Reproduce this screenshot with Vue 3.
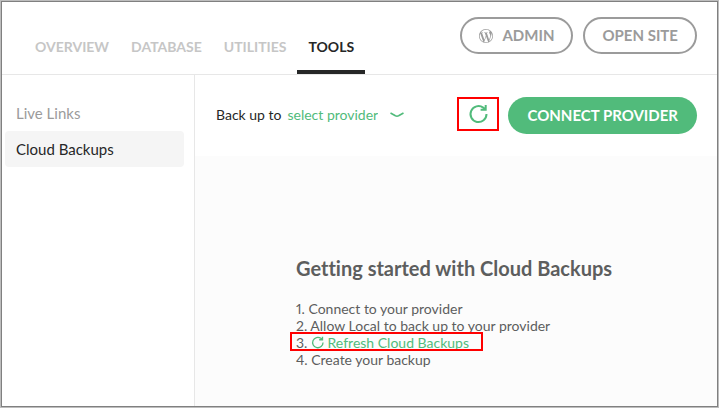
<script setup>
import { ref } from 'vue'

const tabs = ['OVERVIEW', 'DATABASE', 'UTILITIES', 'TOOLS']
const activeTab = ref('TOOLS')
const sections = ['Live Links', 'Cloud Backups']
const activeSection = ref('Cloud Backups')
const provider = ref('')
</script>

<template>
  <div class="window">
    <header class="header">
      <nav class="tabs">
        <a
          v-for="tab in tabs"
          :key="tab"
          href="#"
          class="tab"
          :class="{ active: tab === activeTab }"
          @click.prevent="activeTab = tab"
        >{{ tab }}</a>
      </nav>
      <div class="site-actions">
        <button type="button" class="pill outline">
          <svg class="wp" viewBox="0 0 24 24" aria-hidden="true">
            <path d="M21.469 6.825c.84 1.537 1.318 3.3 1.318 5.175 0 3.979-2.156 7.456-5.363 9.325l3.295-9.527c.615-1.54.82-2.771.82-3.864 0-.405-.026-.78-.07-1.11m-7.981.105c.647-.03 1.232-.105 1.232-.105.582-.075.514-.93-.067-.899 0 0-1.755.135-2.88.135-1.064 0-2.85-.15-2.85-.15-.585-.03-.661.855-.075.885 0 0 .54.061 1.125.09l1.68 4.605-2.37 7.08L5.354 6.9c.649-.03 1.234-.1 1.234-.1.585-.075.516-.93-.065-.896 0 0-1.746.138-2.874.138-.2 0-.438-.008-.69-.015C4.911 3.15 8.235 1.215 12 1.215c2.809 0 5.365 1.072 7.286 2.833-.046-.003-.091-.009-.141-.009-1.06 0-1.812.923-1.812 1.914 0 .89.513 1.643 1.06 2.531.411.72.89 1.643.89 2.977 0 .915-.354 1.994-.821 3.479l-1.075 3.585-3.9-11.61.001.014zM12 22.784c-1.059 0-2.081-.153-3.048-.437l3.237-9.406 3.315 9.087c.024.053.05.101.078.149-1.12.393-2.325.609-3.582.609M1.211 12c0-1.564.336-3.05.935-4.39L7.29 21.709C3.694 19.96 1.212 16.271 1.211 12M12 0C5.385 0 0 5.385 0 12s5.385 12 12 12 12-5.385 12-12S18.615 0 12 0" />
          </svg>
          <span>ADMIN</span>
        </button>
        <button type="button" class="pill outline">OPEN SITE</button>
      </div>
    </header>

    <div class="body">
      <aside class="sidebar">
        <a
          v-for="section in sections"
          :key="section"
          href="#"
          class="section"
          :class="{ active: section === activeSection }"
          @click.prevent="activeSection = section"
        >{{ section }}</a>
      </aside>

      <main class="main">
        <div class="toolbar">
          <div class="picker">
            <label for="provider">Back up to</label>
            <select id="provider" v-model="provider">
              <option value="">select provider</option>
            </select>
            <svg class="chevron" viewBox="0 0 14 6" aria-hidden="true">
              <path d="M0.5 1 L5.4 3.8 Q7 4.6 8.6 3.8 L13.5 1" />
            </svg>
          </div>
          <button type="button" class="refresh" aria-label="Refresh">
            <svg viewBox="0 0 20 20" aria-hidden="true">
              <path class="stroke" d="M18.5 10 A8 8 0 1 1 15.2 3.6 L17.2 5" />
              <path class="stroke" d="M17.7 1 V5.8 H12.6" />
            </svg>
          </button>
          <button type="button" class="pill solid">CONNECT PROVIDER</button>
        </div>

        <section class="content">
          <div class="guide">
            <h1>Getting started with Cloud Backups</h1>
            <ol>
              <li>1. Connect to your provider</li>
              <li>2. Allow Local to back up to your provider</li>
              <li class="marked">3.
                <a href="#" @click.prevent>
                  <svg viewBox="0 0 20 20" aria-hidden="true">
                    <path class="stroke" d="M18.5 10 A8 8 0 1 1 15.2 3.6 L17.2 5" />
                    <path class="stroke" d="M17.7 1 V5.8 H12.6" />
                  </svg>
                  Refresh Cloud Backups</a>
              </li>
              <li>4. Create your backup</li>
            </ol>
          </div>
        </section>
      </main>
    </div>
  </div>
</template>

<style>
body {
  background: #fff;
}
</style>

<style scoped>
.window {
  box-sizing: border-box;
  min-height: 100vh;
  display: flex;
  flex-direction: column;
  border: 1px solid #bdbdbd;
  outline: 1px solid #808080;
  outline-offset: -2px;
  padding: 1px;
  background: #fff;
  color: #262727;
  font-family: Lato, "Open Sans", sans-serif;
  font-size: 14px;
  font-variant-ligatures: none;
  font-variant-numeric: proportional-nums;
}

a {
  text-decoration: none;
}

.header {
  display: flex;
  justify-content: space-between;
  height: 72px;
  padding: 0 20px 0 22px;
  border-bottom: 1px solid #e7e7e7;
}

.tabs {
  display: flex;
}

.tab {
  box-sizing: border-box;
  padding: 34px 11px 0;
  border-bottom: 4px solid transparent;
  color: #c6c6c6;
  font-size: 14px;
  font-weight: 700;
  line-height: 22px;
}

.tab.active {
  color: #262727;
  border-color: #262727;
}

.site-actions {
  display: flex;
  gap: 10px;
  padding-top: 15px;
}

.pill {
  box-sizing: border-box;
  height: 37px;
  display: flex;
  align-items: center;
  border-radius: 19px;
  font-family: inherit;
  font-size: 15px;
  font-weight: 700;
  line-height: 18px;
  white-space: nowrap;
}

.outline {
  gap: 9px;
  padding: 0 17px 2px;
  border: 2px solid #9b9b9b;
  background: #fff;
  color: #9b9b9b;
}

.solid {
  padding: 0 19px 2px;
  border: 0;
  background: #51bb7b;
  color: #fff;
}

.wp {
  width: 14px;
  height: 14px;
  margin-top: 2px;
  fill: #9b9b9b;
}

.body {
  flex: 1;
  display: flex;
}

.sidebar {
  box-sizing: border-box;
  width: 193px;
  flex: none;
  padding: 20px 10px 0 3px;
  border-right: 1px solid #e7e7e7;
}

.section {
  display: block;
  padding: 0 11px;
  border-radius: 4px;
  color: #9b9b9b;
  font-size: 15px;
  line-height: 36px;
}

.section.active {
  background: #f5f5f5;
  color: #262727;
}

.main {
  flex: 1;
  display: flex;
  flex-direction: column;
}

.toolbar {
  display: flex;
  align-items: flex-start;
  padding: 22px 20px;
}

.picker {
  flex: 1;
  display: flex;
  align-items: center;
  gap: 6px;
  height: 35px;
  padding-left: 1px;
}

.picker select {
  appearance: none;
  margin: 0;
  padding: 0;
  border: 0;
  background: transparent;
  color: #51bb7b;
  font: inherit;
}

.chevron {
  width: 14px;
  height: 6px;
  margin-left: 6px;
  fill: none;
  stroke: #51bb7b;
  stroke-width: 1.6;
}

.refresh {
  box-sizing: border-box;
  width: 42px;
  height: 34px;
  display: grid;
  place-items: center;
  margin-right: 9px;
  padding: 0;
  border: 2px solid #f00;
  background: #fff;
}

.refresh svg {
  width: 20px;
  height: 20px;
}

.stroke {
  fill: none;
  stroke: #51bb7b;
  stroke-width: 2;
}

.content {
  flex: 1;
  display: flex;
  justify-content: center;
  padding: 100px 20px 36px;
  background: #fcfcfc;
}

.guide {
  min-width: 320px;
  color: #5d5e5e;
}

h1 {
  margin: 0 0 19px;
  font-size: 20px;
  font-weight: 700;
  line-height: 25px;
}

ol {
  margin: 0;
  padding: 0;
  list-style: none;
  line-height: 17px;
}

.marked {
  position: relative;
}

.marked::after {
  content: "";
  position: absolute;
  inset: -2px auto 0 -6px;
  box-sizing: border-box;
  width: 193px;
  border: 2px solid #f00;
  pointer-events: none;
}

.marked a {
  color: #51bb7b;
}

.marked svg {
  width: 13px;
  height: 13px;
  vertical-align: -1px;
}
</style>
